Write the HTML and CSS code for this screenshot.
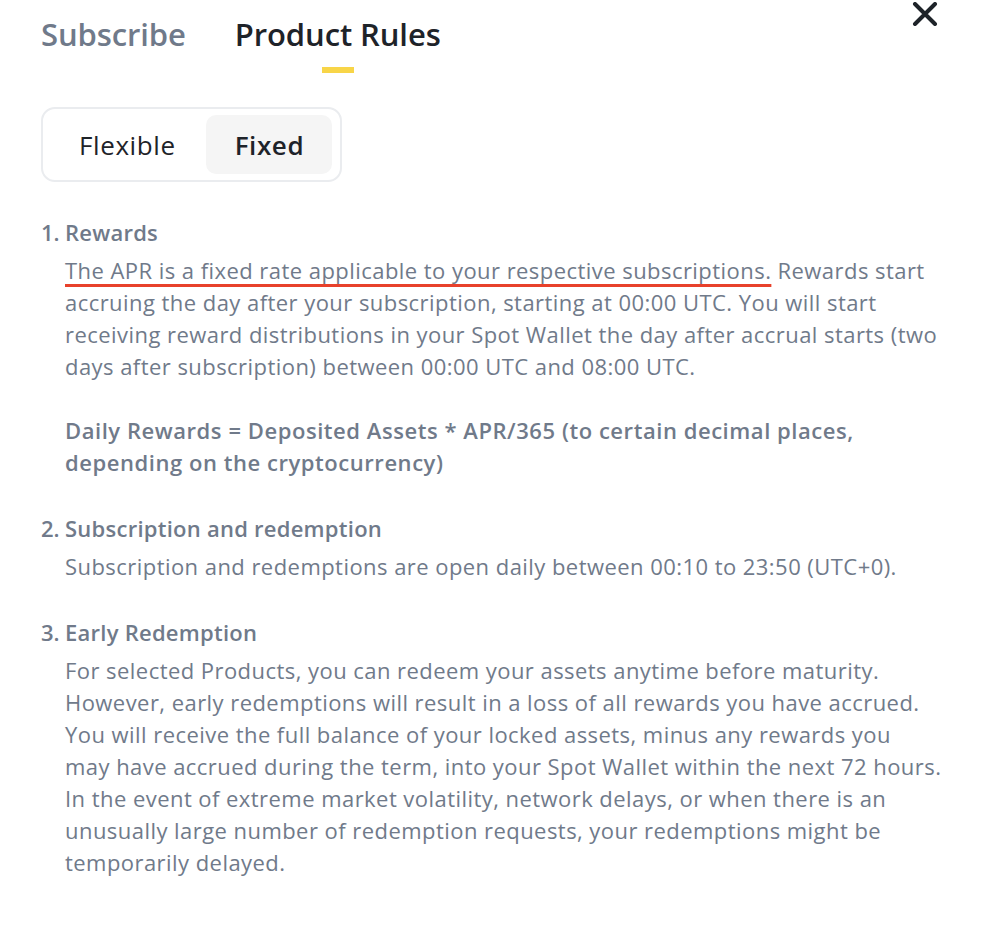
FILE: index.html
```html
<!DOCTYPE html>
<html lang="en">
<head>
<meta charset="utf-8">
<title>Product Rules</title>
<link rel="stylesheet" href="styles.css">
</head>
<body>
<div class="panel">
  <header class="header">
    <nav class="tabs">
      <div class="tab">Subscribe</div>
      <div class="tab tab-active">Product Rules<span class="indicator"></span></div>
    </nav>
    <button class="close" aria-label="Close">
      <svg width="26" height="24" viewBox="0 0 26 24"><path d="M3 2 L23 22 M23 2 L3 22" stroke="#1E2329" stroke-width="4" stroke-linecap="round"/></svg>
    </button>
  </header>

  <div class="toggle">
    <div class="seg">Flexible</div>
    <div class="seg seg-active">Fixed</div>
  </div>

  <ol class="rules">
    <li class="rule">
      <div class="rule-title"><span class="num">1.</span>Rewards</div>
      <div class="rule-body">
        <p><span class="marked">The APR is a fixed rate applicable to your respective subscriptions.</span> Rewards start<br>accruing the day after your subscription, starting at 00:00 UTC. You will start<br>receiving reward distributions in your Spot Wallet the day after accrual starts (two<br>days after subscription) between 00:00 UTC and 08:00 UTC.</p>
        <p class="formula">Daily Rewards = Deposited Assets * APR/365 (to certain decimal places,<br>depending on the cryptocurrency)</p>
      </div>
    </li>
    <li class="rule">
      <div class="rule-title"><span class="num">2.</span>Subscription and redemption</div>
      <div class="rule-body">
        <p>Subscription and redemptions are open daily between 00:10 to 23:50 (UTC+0).</p>
      </div>
    </li>
    <li class="rule">
      <div class="rule-title"><span class="num">3.</span>Early Redemption</div>
      <div class="rule-body">
        <p>For selected Products, you can redeem your assets anytime before maturity.<br>However, early redemptions will result in a loss of all rewards you have accrued.<br>You will receive the full balance of your locked assets, minus any rewards you<br>may have accrued during the term, into your Spot Wallet within the next 72 hours.<br>In the event of extreme market volatility, network delays, or when there is an<br>unusually large number of redemption requests, your redemptions might be<br>temporarily delayed.</p>
      </div>
    </li>
  </ol>
</div>
</body>
</html>
```

FILE: styles.css
```css
* { box-sizing: border-box; }
html, body { margin: 0; padding: 0; background: #ffffff; }
body {
  font-family: "Open Sans", "Noto Sans", "Liberation Sans", sans-serif;
  color: #707A8A;
}
.panel {
  padding: 0 0 0 41px;
  width: 988px;
}
.header {
  display: flex;
  justify-content: space-between;
  align-items: flex-start;
  height: 107px;
}
.tabs {
  display: flex;
  gap: 49px;
  padding-top: 13px;
}
.tab {
  position: relative;
  font-size: 31px;
  font-weight: 600;
  line-height: 42px;
  color: #707A8A;
  letter-spacing: -0.1px;
}
.tab-active { color: #1E2329; }
.indicator {
  position: absolute;
  left: 50%;
  top: 54px;
  width: 32px;
  height: 6px;
  margin-left: -16px;
  background: #F8D548;
}
.close {
  border: 0;
  background: none;
  padding: 0;
  margin: 2px 50px 0 0;
  width: 26px;
  height: 24px;
  cursor: pointer;
}
.toggle {
  display: inline-flex;
  gap: 6px;
  padding: 6px 8px 6px 6px;
  border: 2px solid #EAECEF;
  border-radius: 14px;
  height: 75px;
  align-items: stretch;
}
.seg {
  display: flex;
  align-items: center;
  justify-content: center;
  font-size: 26px;
  letter-spacing: 0.6px;
  color: #1E2329;
  border-radius: 10px;
  padding: 0 24px 0 30px;
}
.seg-active {
  background: #F5F5F5;
  font-weight: 600;
  padding: 0 28px 0 29px;
}
.rules {
  list-style: none;
  margin: 34px 0 0 0;
  padding: 0;
}
.rule { margin-bottom: 34px; }
.rule-title {
  display: flex;
  font-size: 22px;
  font-weight: 600;
  line-height: 32px;
  letter-spacing: 0.25px;
  color: #707A8A;
}
.num { width: 24px; letter-spacing: 0; }
.rule-body {
  padding-left: 24px;
  margin-top: 6px;
  font-size: 22px;
  line-height: 32px;
  letter-spacing: 0.45px;
}
.rule-body p { margin: 0; white-space: nowrap; }
.rule-body p + p { margin-top: 32px; }
.formula { font-weight: 600; letter-spacing: 0.55px; }
.marked {
  text-decoration: underline;
  text-decoration-color: #E8412B;
  text-decoration-thickness: 3px;
  text-underline-offset: 5px;
}
```
